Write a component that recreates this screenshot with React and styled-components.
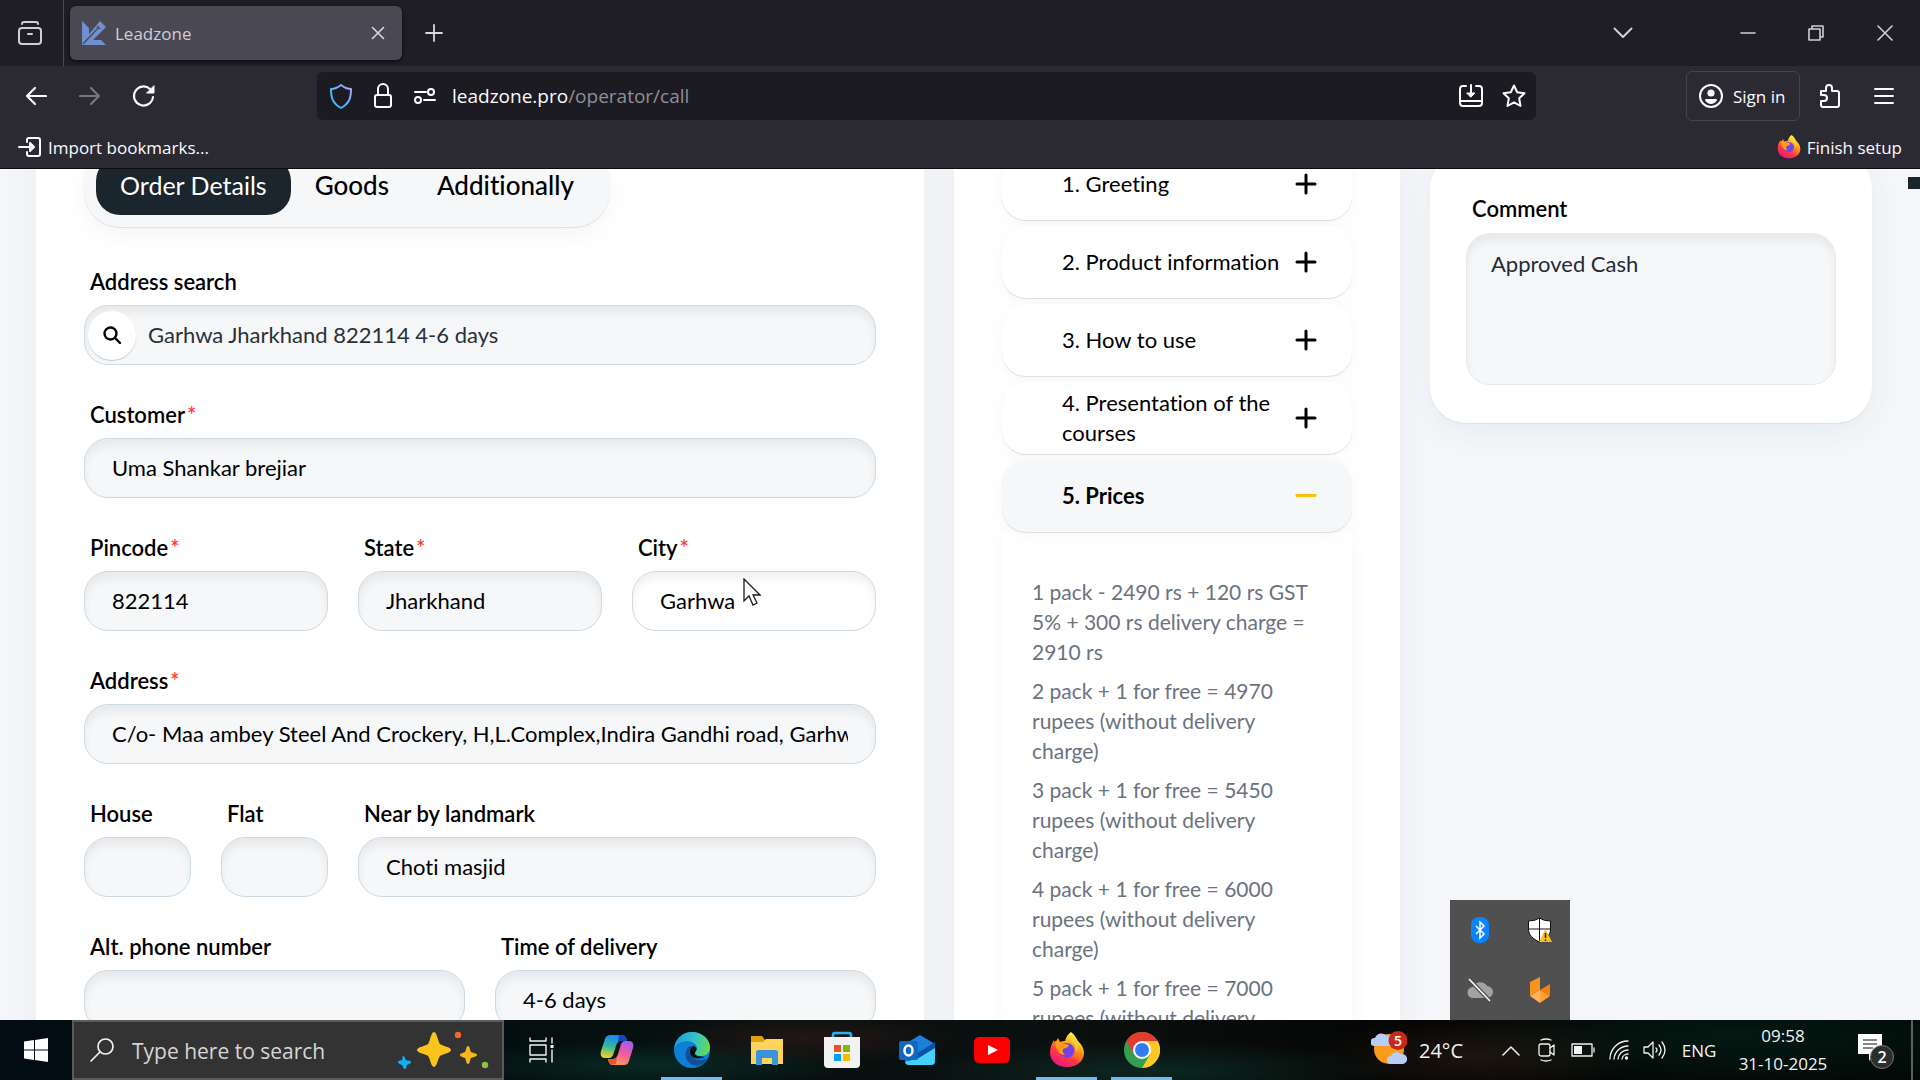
import React from "react";
import styled, { createGlobalStyle, css } from "styled-components";

const UI_FONT = '"Open Sans", "Noto Sans", sans-serif';
const PAGE_FONT = 'Lato, "Open Sans", sans-serif';

const GlobalStyle = createGlobalStyle`
  *, *::before, *::after { box-sizing: border-box; }
  html, body { margin: 0; height: 100%; overflow: hidden; background: #000; }
  button, input, textarea { font: inherit; color: inherit; margin: 0; }
  button { background: none; border: 0; padding: 0; cursor: default; }
  p { margin: 0; }
`;

const Desktop = styled.div`
  display: flex;
  flex-direction: column;
  height: 100vh;
  position: relative;
  overflow: hidden;
  font-family: ${UI_FONT};
`;

/* ---------- browser chrome ---------- */

const TabBar = styled.header`
  display: flex;
  align-items: center;
  flex: none;
  height: 66px;
  background: #1f1e25;
  color: #cfcfd8;
`;

const ViewButton = styled.button`
  width: 64px;
  height: 66px;
  padding-right: 4px;
  display: grid;
  place-items: center;
  border-right: 1px solid #4a4950;
`;

const BrowserTab = styled.div`
  display: flex;
  align-items: center;
  gap: 9px;
  width: 332px;
  height: 54px;
  margin-left: 6px;
  padding: 0 12px;
  border-radius: 6px;
  background: #4a4852;
  box-shadow: 0 1px 4px rgba(0, 0, 0, 0.7);
  font-size: 17px;
`;

const TabTitle = styled.span`
  flex: 1;
`;

const IconButton = styled.button`
  display: grid;
  place-items: center;
  flex: none;
  width: ${(p) => p.$w || 54}px;
  height: 48px;
  color: ${(p) => p.$color || "#fbfbfe"};
`;

const TabClose = styled(IconButton)`
  width: 24px;
  height: 24px;
`;

const WindowControls = styled.div`
  display: flex;
  margin-left: auto;
`;

const NavBar = styled.nav`
  display: flex;
  align-items: center;
  flex: none;
  height: 60px;
  padding: 0 9px;
  background: #2b2a33;
  color: #fbfbfe;
`;

const UrlBar = styled.div`
  display: flex;
  align-items: center;
  flex: 1;
  height: 48px;
  margin: 0 150px 0 146px;
  padding: 0 0 0 3px;
  border-radius: 6px;
  background: #1c1b22;
`;

const UrlText = styled.div`
  flex: 1;
  padding-left: 6px;
  font-size: 19px;
  line-height: 30px;
  color: #8f8f98;
`;

const UrlHost = styled.span`
  color: #fbfbfe;
`;

const SignIn = styled.button`
  display: flex;
  align-items: center;
  gap: 10px;
  height: 50px;
  width: 114px;
  margin-right: 3px;
  padding: 0 11px 0 12px;
  border: 1px solid #45444d;
  border-radius: 6px;
  font-size: 17px;
  white-space: nowrap;
`;

const BookmarkBar = styled.div`
  display: flex;
  justify-content: space-between;
  align-items: center;
  flex: none;
  height: 43px;
  padding: 0 18px 0 18px;
  background: #2b2a33;
  border-bottom: 1px solid #0c0c0d;
  color: #fbfbfe;
`;

const Bookmark = styled.button`
  display: flex;
  align-items: center;
  gap: 6px;
  font-size: 17px;
`;

/* ---------- page ---------- */

const Viewport = styled.main`
  flex: 1;
  min-height: 0;
  overflow: hidden;
  background: #f5f6f9;
  color: #000;
  font-family: ${PAGE_FONT};
  font-size: 22px;
  font-variant-ligatures: none;
  line-height: 30px;
`;

const Page = styled.div`
  display: grid;
  grid-template-columns: 888fr 446fr 442fr;
  gap: 30px;
  min-height: 100%;
  margin-top: -24px;
  padding: 0 48px 0 36px;
`;

const Panel = styled.section`
  background: #fff;
  padding: ${(p) => p.$pad || "0 48px"};
  box-shadow: 0 0 30px rgba(30, 60, 90, 0.05);
  min-width: 0;
`;

const Tabs = styled.div`
  display: inline-flex;
  padding: 12px;
  border-radius: 36px;
  background: #f5f7f9;
  box-shadow: 0 1px 1px rgba(0, 0, 0, 0.1), 0 10px 24px rgba(0, 30, 20, 0.04);
`;

const Tab = styled.button`
  height: 58px;
  padding: 0 24px 2px;
  border-radius: 24px;
  font-size: ${(p) => (p.$active ? 25 : 26)}px;
  font-weight: ${(p) => (p.$active ? 400 : 500)};
  color: ${(p) => (p.$active ? "#fff" : "#000")};
  background: ${(p) => (p.$active ? "#1b252d" : "transparent")};
`;

const Form = styled.form`
  display: grid;
  grid-template-columns: repeat(6, minmax(0, 1fr));
  gap: 35px 30px;
  margin-top: 40px;
`;

const Field = styled.div`
  grid-column: span ${(p) => p.$span};
  display: flex;
  flex-direction: column;
  gap: 8px;
`;

const Label = styled.label`
  padding-left: 6px;
  font-size: 22px;
  font-weight: 600;
  white-space: nowrap;
`;

const Required = styled.span`
  margin-left: 2px;
  color: #ff3b30;
`;

const inset = css`
  border: 1px solid #cddae4;
  border-radius: 24px;
  background: ${(p) => (p.$white ? "#fff" : "#f5f7f9")};
  box-shadow: inset 0 7px 8px rgba(0, 0, 0, 0.06);
  outline: 0;
`;

const TextInput = styled.input`
  ${inset}
  width: 100%;
  height: 60px;
  padding: 0 27px 2px;
`;

const SearchBox = styled.div`
  ${inset}
  display: flex;
  align-items: center;
  height: 60px;
  padding: 0 3px;
  color: #2a3138;
`;

const SearchButton = styled.button`
  display: grid;
  place-items: center;
  flex: none;
  width: 48px;
  height: 49px;
  border-radius: 24px;
  background: #fff;
  color: #000;
  box-shadow: 0 1px 1px #bccddb;
`;

const SearchInput = styled.input`
  flex: 1;
  min-width: 0;
  padding: 0 12px;
  border: 0;
  outline: 0;
  background: transparent;
`;

const Steps = styled.div`
  display: flex;
  flex-direction: column;
  gap: 6px;
`;

const Step = styled.button`
  display: flex;
  align-items: center;
  justify-content: space-between;
  height: 72px;
  padding: 0 35px 0 60px;
  border-radius: 24px;
  background: ${(p) => (p.$open ? "#f5f7f9" : "#fff")};
  box-shadow: 0 1px 1px rgba(40, 70, 110, 0.15), 0 4px 20px rgba(0, 30, 20, 0.03);
  font-weight: ${(p) => (p.$open ? 700 : 400)};
  text-align: left;
`;

const StepTitle = styled.span`
  max-width: 224px;
`;

const StepBody = styled.div`
  display: flex;
  flex-direction: column;
  gap: 9px;
  padding: 45px 30px;
  color: #6b7280;
  font-size: 21px;
  box-shadow: 0 4px 20px rgba(0, 30, 20, 0.04);
`;

const CommentCard = styled.section`
  align-self: start;
  display: flex;
  flex-direction: column;
  gap: 9px;
  margin-top: 8px;
  padding: 41px 36px 38px;
  border-radius: 36px;
  background: #fff;
  box-shadow: 0 1px 1px rgba(0, 0, 0, 0.06), 0 8px 30px rgba(20, 60, 90, 0.06);
`;

const Comment = styled.textarea`
  ${inset}
  display: block;
  width: 100%;
  height: 152px;
  padding: 15px 24px;
  border-color: #e3eaf0;
  color: #252b32;
  resize: none;
`;

const ScrollMark = styled.div`
  position: absolute;
  right: 0;
  top: 177px;
  width: 12px;
  height: 12px;
  background: #1b252d;
`;

const Pointer = styled.svg`
  position: absolute;
  left: 743px;
  top: 578px;
`;

/* ---------- taskbar ---------- */

const Tray = styled.div`
  position: absolute;
  right: 350px;
  bottom: 60px;
  display: grid;
  grid-template-columns: 60px 60px;
  grid-auto-rows: 60px;
  background: #505050;
`;

const TrayItem = styled.button`
  display: grid;
  place-items: center;
`;

const Taskbar = styled.footer`
  display: flex;
  flex: none;
  height: 60px;
  color: #f2f2f2;
  background:
    radial-gradient(ellipse 160px 26px at 42% 30%, rgba(70, 30, 28, 0.45), transparent),
    radial-gradient(ellipse 240px 30px at 60% 85%, rgba(14, 60, 50, 0.55), transparent),
    radial-gradient(ellipse 200px 24px at 34% 75%, rgba(14, 66, 56, 0.5), transparent),
    radial-gradient(ellipse 160px 40px at 77% 60%, rgba(54, 34, 24, 0.5), transparent),
    radial-gradient(ellipse 300px 50px at 90% 30%, rgba(4, 32, 24, 0.7), transparent),
    linear-gradient(90deg, #020d14 0%, #04100f 30%, #0b100f 55%, #040504 75%, #020a08 100%);
`;

const StartButton = styled.button`
  width: 72px;
  display: grid;
  place-items: center;
`;

const TaskSearch = styled.label`
  display: flex;
  align-items: center;
  width: 432px;
  padding: 0 12px 0 16px;
  border: 2px solid #5b5b5b;
  background: #333;
`;

const TaskSearchInput = styled.input`
  flex: 1;
  min-width: 0;
  padding: 2px 0 0 18px;
  border: 0;
  outline: 0;
  background: transparent;
  font-size: 21px;
  &::placeholder { color: #d6d6d6; opacity: 1; }
`;

const TaskApp = styled.button`
  display: grid;
  place-items: center;
  width: 75px;
  height: 60px;
  background: ${(p) =>
    p.$running ? "linear-gradient(#76b9ed, #76b9ed) center bottom / 61px 3px no-repeat" : "none"};
`;

const Status = styled.div`
  display: flex;
  margin-left: auto;
`;

const StatusItem = styled.button`
  display: grid;
  place-items: center;
  width: ${(p) => p.$w || 36}px;
  font-size: 17px;
`;

const Weather = styled.button`
  display: flex;
  align-items: center;
  gap: 12px;
  width: 122px;
  font-size: 20px;
`;

const Clock = styled.button`
  width: 116px;
  font-size: 17px;
  line-height: 28px;
  white-space: nowrap;
`;

const ShowDesktop = styled.button`
  width: 9px;
  border-left: 2px solid #5c5f5f;
`;

/* ---------- drawings ---------- */

const Line = ({ w = 24, h = w, box = `0 0 ${w} ${h}`, sw = 2, children }) => (
  <svg width={w} height={h} viewBox={box} fill="none" stroke="currentColor" strokeWidth={sw} strokeLinecap="round" strokeLinejoin="round" aria-hidden="true">
    {children}
  </svg>
);

const Firefox = ({ size, id }) => (
  <svg width={size} height={size} viewBox="0 0 36 36" aria-hidden="true">
    <defs>
      <linearGradient id={id} x1="0.8" y1="0" x2="0.25" y2="1">
        <stop offset="0.1" stopColor="#fff44f" />
        <stop offset="0.4" stopColor="#ff980e" />
        <stop offset="0.7" stopColor="#ff3647" />
        <stop offset="1" stopColor="#e31587" />
      </linearGradient>
    </defs>
    <path fill={`url(#${id})`} d="M22 0c4 3 5 6 7 9 3 3 6 7 6 12 0 8-7 14-17 14S1 29 1 20c0-5 2-9 4-12l1 3 3-5 2 4c2-1 4-1 5-1 1-4 3-7 6-9z" />
    <circle cx="18" cy="18.500" r="7.500" fill="#7542e5" />
    <path fill="#ff9a1f" d="M6 9c4 0 6 1 8 3 3 0 5 0 6 1-1 3-4 3-6 4-1 2 0 4 2 6-5 0-9-4-10-14z" />
    <path fill="#ffd43a" d="M20 8c5 2 8 6 7 12 3-4 2-9-2-13l-3-5c-2 1-3 4-2 6z" opacity=".8" />
  </svg>
);

const Favicon = () => (
  <svg width="24" height="24" viewBox="0 0 24 24" aria-hidden="true">
    <path fill="#6e90cf" d="M0 0l7 7v6L18 0l6 6-13 13h8l5 5H0z" />
    <path d="M1 23L17 6M15 5l3 3" stroke="#4a4852" strokeWidth="1.200" fill="none" />
  </svg>
);

const SearchGlass = () => (
  <Line w={20} sw={2.4}>
    <circle cx="8.500" cy="8.500" r="6" />
    <path d="M13 13l5 5" />
  </Line>
);

const Plus = () => (
  <Line w={22} sw={3}>
    <path d="M11 2v18M2 11h18" />
  </Line>
);

const Minus = () => (
  <svg width="22" height="22" viewBox="0 0 22 22" aria-hidden="true">
    <rect x="0.500" y="9" width="21" height="3" rx="1" fill="#ffc107" />
  </svg>
);

const Sparkles = () => (
  <svg width="92" height="44" viewBox="0 0 92 44" aria-hidden="true">
    <path fill="#fbc41c" d="M36 4c3 0 4 10 6 12s11 3 11 6-9 4-11 6-3 11-6 11-4-9-6-11-11-3-11-6 9-4 11-6 3-12 6-12z" />
    <path fill="#f8b71c" d="M70 18c2 0 2 5 3 6s6 1 6 3-5 2-6 3-1 6-3 6-2-5-3-6-5-1-5-3 4-2 5-3 1-6 3-6z" />
    <path fill="#0bb1f4" d="M5 28c2 0 2 3 3 4s5 0 5 2-3 2-4 3 0 4-2 4-2-3-3-4-4-1-4-3 3-1 4-2 0-4 1-4z" />
    <circle cx="60" cy="7" r="3.200" fill="#f2672a" />
    <circle cx="87" cy="37" r="3.200" fill="#8bc43f" />
  </svg>
);

const Copilot = () => (
  <svg width="36" height="36" viewBox="0 0 36 36" aria-hidden="true">
    <defs>
      <linearGradient id="cpl" x1="0.500" y1="0" x2="0.300" y2="1">
        <stop offset="0" stopColor="#1b86f2" /><stop offset="0.500" stopColor="#2fb7a0" /><stop offset="1" stopColor="#f4d51c" />
      </linearGradient>
      <linearGradient id="cpr" x1="0.700" y1="0" x2="0.300" y2="1">
        <stop offset="0" stopColor="#a35bf0" /><stop offset="0.500" stopColor="#f25c9a" /><stop offset="1" stopColor="#ffa04c" />
      </linearGradient>
    </defs>
    <path fill="url(#cpl)" d="M11 3h12c3 0 4 2 5 6h-6c-3 0-4 2-5 5l-3 9c-1 2-2 3-4 3H6c-4 0-5-3-4-7L6 7c1-3 3-4 5-4z" />
    <path fill="#1547c0" d="M20 3h3c3 0 4 2 5 6h-6c-1 0-2 0-3 1z" />
    <path fill="url(#cpr)" d="M25 33H14c-3 0-4-2-5-6h5c3 0 4-2 5-5l3-10c1-2 2-3 4-3h4c4 0 5 3 4 7l-4 13c-1 3-3 4-5 4z" />
    <path fill="#f2502f" d="M9 27h5c2 0 3-1 4-3l-1 8c-5 2-7 0-8-5z" />
  </svg>
);

const Edge = () => (
  <svg width="36" height="36" viewBox="0 0 36 36" aria-hidden="true">
    <defs>
      <linearGradient id="edg" x1="0" y1="0.300" x2="1" y2="0.500">
        <stop offset="0" stopColor="#1a9be0" /><stop offset="0.550" stopColor="#35c1c9" /><stop offset="1" stopColor="#63dc52" />
      </linearGradient>
    </defs>
    <circle cx="18" cy="18" r="18" fill="#0f7fd6" />
    <path fill="url(#edg)" d="M0 18C1 7 8 0 18 0c10 0 18 7 18 15 0 6-4 9-9 9-4 0-6-2-6-3 0-2 2-2 2-5 0-4-5-7-10-7C7 9 2 12 0 18z" />
    <path fill="#134f97" d="M13 17c-4 7 0 16 10 17 4 0 8-3 11-8-7 4-16 2-18-4-1-3 0-6 2-8-2 0-4 1-5 3z" />
    <path fill="#0a1210" d="M16 20c0-4 2-6 4-6 3 1 3 3 2 5-2 2-1 4 1 5l8 1c-8 3-15 1-15-5z" />
  </svg>
);

const Explorer = () => (
  <svg width="34" height="34" viewBox="0 0 34 34" aria-hidden="true">
    <path fill="#e0a10c" d="M1 3h11l3 4v4H1z" />
    <path fill="#ffd35c" d="M1 9h12l3-3h17v25H1z" />
    <path fill="#3b93dc" d="M6 19c0-1 1-2 2-2h18c1 0 2 1 2 2v13h-6v-7H12v7H6z" />
  </svg>
);

const Store = () => (
  <svg width="36" height="38" viewBox="0 0 36 38" aria-hidden="true">
    <path d="M9 8V4q0-2 2-2h14q2 0 2 2v4" fill="none" stroke="#29b4ee" strokeWidth="2.500" />
    <path fill="#f2f2f2" d="M0 6h36v27q0 4-4 4H4q-4 0-4-4z" />
    <path fill="#e8502a" d="M10 14h7v7h-7z" /><path fill="#7fba00" d="M19 14h7v7h-7z" />
    <path fill="#00a4ef" d="M10 23h7v7h-7z" /><path fill="#ffb900" d="M19 23h7v7h-7z" />
  </svg>
);

const Outlook = () => (
  <svg width="38" height="36" viewBox="0 0 38 36" aria-hidden="true">
    <path fill="#1d7fd8" d="M7 12L22 3l15 9v17q0 4-4 4H11q-4 0-4-4z" />
    <path fill="#0b52a4" d="M18 22L37 10v7L20 29z" />
    <path fill="#43d0fa" d="M37 16v13q0 4-4 4H11q-3 0-4-3l12-3z" />
    <rect x="1" y="9" width="19" height="19" rx="2" fill="#1168c4" />
    <ellipse cx="10.500" cy="18.500" rx="4" ry="5" fill="none" stroke="#fff" strokeWidth="2.500" />
  </svg>
);

const YouTube = () => (
  <svg width="36" height="26" viewBox="0 0 36 26" aria-hidden="true">
    <rect width="36" height="26" rx="5" fill="#f00" />
    <path fill="#fff" d="M14 8l10 5-10 5z" />
  </svg>
);

const Chrome = () => (
  <svg width="36" height="36" viewBox="0 0 36 36" aria-hidden="true">
    <circle cx="18" cy="18" r="18" fill="#34a04f" />
    <path fill="#ffc926" d="M18 9h15.600A18 18 0 0 1 18 36l8-13.500z" />
    <path fill="#e33b2e" d="M2.400 9A18 18 0 0 1 33.600 9H18l-8 13.500z" />
    <circle cx="18" cy="18" r="9" fill="#fff" />
    <circle cx="18" cy="18" r="7" fill="#2f7cf0" />
  </svg>
);

const WeatherIcon = () => (
  <svg width="36" height="38" viewBox="0 0 36 38" aria-hidden="true">
    <circle cx="18" cy="18" r="15" fill="#fb9a1c" />
    <path fill="#b7cdf5" d="M3 15a4 4 0 0 1 1-8 7 7 0 0 1 12-2 5 5 0 0 1 4 10zM20 33a4 4 0 0 1 0-8 6 6 0 0 1 10-2 5 5 0 0 1 2 10z" />
    <circle cx="27" cy="9.500" r="9.500" fill="#c8281c" />
    <text x="27" y="14.500" fill="#fff" fontSize="14" fontWeight="600" textAnchor="middle" fontFamily="Open Sans">5</text>
  </svg>
);

const Notification = () => (
  <svg width="38" height="38" viewBox="0 0 38 38" aria-hidden="true">
    <path fill="#fff" d="M1 3h24v20H17l-5 7v-7H1z" />
    <path stroke="#111" strokeWidth="1.200" d="M6 9h14M6 13h14M6 17h10" />
    <circle cx="25" cy="26" r="11.500" fill="#2c2e2e" stroke="#777" />
    <text x="25" y="32" fill="#fff" fontSize="16" fontWeight="600" textAnchor="middle" fontFamily="Open Sans">2</text>
  </svg>
);

/* ---------- composition ---------- */

const FIELDS = [
  { id: "customer", label: "Customer", required: true, span: 6, value: "Uma Shankar brejiar" },
  { id: "pincode", label: "Pincode", required: true, span: 2, value: "822114" },
  { id: "state", label: "State", required: true, span: 2, value: "Jharkhand" },
  { id: "city", label: "City", required: true, span: 2, value: "Garhwa", white: true },
  {
    id: "address", label: "Address", required: true, span: 6,
    value: "C/o- Maa ambey Steel And Crockery, H,L.Complex,Indira Gandhi road, Garhwa",
  },
  { id: "house", label: "House", span: 1, value: "" },
  { id: "flat", label: "Flat", span: 1, value: "" },
  { id: "landmark", label: "Near by landmark", span: 4, value: "Choti masjid" },
  { id: "phone", label: "Alt. phone number", span: 3, value: "" },
  { id: "delivery", label: "Time of delivery", span: 3, value: "4-6 days" },
];

const STEPS = ["1. Greeting", "2. Product information", "3. How to use", "4. Presentation of the courses"];

const PRICES = [
  "1 pack - 2490 rs + 120 rs GST 5% + 300 rs delivery charge = 2910 rs",
  "2 pack + 1 for free = 4970 rupees (without delivery charge)",
  "3 pack + 1 for free = 5450 rupees (without delivery charge)",
  "4 pack + 1 for free = 6000 rupees (without delivery charge)",
  "5 pack + 1 for free = 7000 rupees (without delivery charge)",
];

const APPS = [
  { name: "Copilot", icon: <Copilot /> },
  { name: "Edge", icon: <Edge />, running: true },
  { name: "File Explorer", icon: <Explorer /> },
  { name: "Microsoft Store", icon: <Store /> },
  { name: "Outlook", icon: <Outlook /> },
  { name: "YouTube", icon: <YouTube /> },
  { name: "Firefox", icon: <Firefox size={36} id="ffb" />, running: true },
  { name: "Chrome", icon: <Chrome />, running: true },
];

function BrowserChrome() {
  return (
    <>
      <TabBar>
        <ViewButton aria-label="Firefox View">
          <Line>
            <rect x="1" y="7" width="22" height="16" rx="3" />
            <path d="M4 3q0-2 2-2h12q2 0 2 2M10 13h4" />
          </Line>
        </ViewButton>
        <BrowserTab>
          <Favicon />
          <TabTitle>Leadzone</TabTitle>
          <TabClose aria-label="Close tab" $color="#d8d8de">
            <Line w={14} sw={1.6}><path d="M1.500 1.500l11 11M12.500 1.500l-11 11" /></Line>
          </TabClose>
        </BrowserTab>
        <IconButton aria-label="New tab" $w={64} $color="#d8d8de">
          <Line w={18} sw={1.8}><path d="M9 1v16M1 9h16" /></Line>
        </IconButton>
        <WindowControls>
          <IconButton aria-label="List all tabs" $w={182} $color="#cfcfd4">
            <Line w={20} h={12}><path d="M1.500 1.500L10 10l8.500-8.500" /></Line>
          </IconButton>
          <IconButton aria-label="Minimize" $w={68} $color="#cfcfd4">
            <Line w={16} sw={1.6}><path d="M1 8h14" /></Line>
          </IconButton>
          <IconButton aria-label="Restore" $w={68} $color="#cfcfd4">
            <Line w={16} sw={1.6}><path d="M1 4h11v11H1zM4 4V1h11v11h-3" /></Line>
          </IconButton>
          <IconButton aria-label="Close" $w={70} $color="#cfcfd4">
            <Line w={16} sw={1.6}><path d="M1 1l14 14M15 1L1 15" /></Line>
          </IconButton>
        </WindowControls>
      </TabBar>
      <NavBar>
        <IconButton aria-label="Back">
          <Line w={22} h={20} sw={2.2}><path d="M21 10H2M10 2l-8 8 8 8" /></Line>
        </IconButton>
        <IconButton aria-label="Forward" $color="#77767e">
          <Line w={22} h={20} sw={2.2}><path d="M1 10h19M12 2l8 8-8 8" /></Line>
        </IconButton>
        <IconButton aria-label="Reload">
          <Line w={24} h={24} sw={2.2}><path d="M21 13a9.500 9.500 0 1 1-3-8" /><path fill="currentColor" strokeWidth="1" d="M22 2v7h-7z" /></Line>
        </IconButton>
        <UrlBar>
          <IconButton aria-label="Tracking protection" $w={42}>
            <svg width="24" height="26" viewBox="0 0 24 26" fill="none" aria-hidden="true">
              <defs>
                <linearGradient id="shield" x1="1" y1="0" x2="0" y2="1">
                  <stop offset="0" stopColor="#b5a0ff" /><stop offset="1" stopColor="#16c5f8" />
                </linearGradient>
              </defs>
              <path stroke="url(#shield)" strokeWidth="2" strokeLinejoin="round" d="M12 2q5 4 10 4c0 8-1 14-10 19C3 20 2 14 2 6q5 0 10-4z" />
            </svg>
          </IconButton>
          <IconButton aria-label="Connection secure" $w={42}>
            <Line w={20} h={26}><rect x="2" y="12" width="16" height="12" rx="2" /><path d="M5 12V6a5 5 0 0 1 10 0v6" /></Line>
          </IconButton>
          <IconButton aria-label="Permissions" $w={42}>
            <Line w={22} h={18}><path d="M1 5h11M10 13h11" /><circle cx="17" cy="5" r="3" /><circle cx="4" cy="13" r="3" /></Line>
          </IconButton>
          <UrlText role="textbox" aria-label="Address"><UrlHost>leadzone.pro</UrlHost>/operator/call</UrlText>
          <IconButton aria-label="Install page" $w={42}>
            <Line w={24}>
              <path d="M7 2H4Q1 2 1 5v14q0 3 3 3h16q3 0 3-3V5q0-3-3-3h-3M1 17h22M12 1v11" />
              <path fill="currentColor" d="M8 9h8l-4 4z" strokeWidth="1" />
            </Line>
          </IconButton>
          <IconButton aria-label="Bookmark this page" $w={44}>
            <Line w={24}><path d="M12 1.500l3.200 6.700 7.300 1-5.300 5.100 1.300 7.700-6.500-3.600L5.500 22l1.300-7.700L1.500 9.200l7.300-1z" /></Line>
          </IconButton>
        </UrlBar>
        <SignIn>
          <Line w={24}>
            <circle cx="12" cy="12" r="11" />
            <circle cx="12" cy="9" r="2.600" fill="currentColor" />
            <path fill="currentColor" d="M7 16h10q-2 3-5 3t-5-3z" />
          </Line>
          Sign in
        </SignIn>
        <IconButton aria-label="Extensions">
          <Line w={22} h={26}>
            <path d="M2 8h5V5a3 3 0 0 1 6 0v3h5q2 0 2 2v12q0 2-2 2H4q-2 0-2-2v-4h3a3 3 0 0 0 0-6H2z" />
          </Line>
        </IconButton>
        <IconButton aria-label="Menu">
          <Line w={20} h={16}><path d="M1 1h18M1 8h18M1 15h18" /></Line>
        </IconButton>
      </NavBar>
      <BookmarkBar>
        <Bookmark>
          <Line w={24} h={20}>
            <path d="M9 5V3q0-2 2-2h9q2 0 2 2v14q0 2-2 2h-9q-2 0-2-2v-2M1 10h14" />
            <path fill="currentColor" d="M12 6l4 4-4 4z" />
          </Line>
          Import bookmarks...
        </Bookmark>
        <Bookmark>
          <Firefox size={24} id="ffa" />
          Finish setup
        </Bookmark>
      </BookmarkBar>
    </>
  );
}

function OrderPanel() {
  return (
    <Panel>
      <Tabs>
        <Tab $active>Order Details</Tab>
        <Tab>Goods</Tab>
        <Tab>Additionally</Tab>
      </Tabs>
      <Form onSubmit={(e) => e.preventDefault()}>
        <Field $span={6}>
          <Label htmlFor="search">Address search</Label>
          <SearchBox>
            <SearchButton type="button" aria-label="Search"><SearchGlass /></SearchButton>
            <SearchInput id="search" defaultValue="Garhwa Jharkhand 822114 4-6 days" />
          </SearchBox>
        </Field>
        {FIELDS.map((f) => (
          <Field key={f.id} $span={f.span}>
            <Label htmlFor={f.id}>
              {f.label}
              {f.required && <Required>*</Required>}
            </Label>
            <TextInput id={f.id} defaultValue={f.value} $white={f.white} />
          </Field>
        ))}
      </Form>
    </Panel>
  );
}

function ScriptPanel() {
  return (
    <Panel $pad="3px 48px 0">
      <Steps>
        {STEPS.map((s) => (
          <Step key={s}><StepTitle>{s}</StepTitle><Plus /></Step>
        ))}
        <Step $open><StepTitle>5. Prices</StepTitle><Minus /></Step>
      </Steps>
      <StepBody>
        {PRICES.map((p) => <p key={p}>{p}</p>)}
      </StepBody>
    </Panel>
  );
}

function SystemTray() {
  return (
    <Tray>
      <TrayItem aria-label="Bluetooth">
        <svg width="18" height="26" viewBox="0 0 18 26" aria-hidden="true">
          <rect width="18" height="26" rx="8" fill="#0a84ff" />
          <path d="M5 9l8 8-4 4V5l4 4-8 8" fill="none" stroke="#fff" strokeWidth="1.500" />
        </svg>
      </TrayItem>
      <TrayItem aria-label="Security">
        <svg width="26" height="26" viewBox="0 0 26 26" aria-hidden="true">
          <path d="M12.500 1q4 3 11 3v8c0 6-4 10-11 13C6 22 1.500 18 1.500 12V4q7 0 11-3z" fill="#fff" stroke="#111" />
          <path d="M12.500 1v24M1.500 12h22" stroke="#111" />
          <path fill="#fdc11a" d="M18.500 12L25 25H12z" />
          <path d="M18.500 16v5M18.500 22.500v1.500" stroke="#222" strokeWidth="1.500" />
        </svg>
      </TrayItem>
      <TrayItem aria-label="OneDrive">
        <svg width="26" height="24" viewBox="0 0 26 24" aria-hidden="true">
          <path fill="#a2a2a2" d="M6 20a5 5 0 0 1 0-11 8 8 0 0 1 14-1 6 6 0 0 1 0 12z" />
          <path d="M2 1l21 22" stroke="#505050" strokeWidth="4" /><path d="M2 1l21 22" stroke="#fff" strokeWidth="1.600" />
        </svg>
      </TrayItem>
      <TrayItem aria-label="Updater">
        <svg width="22" height="26" viewBox="0 0 22 26" aria-hidden="true">
          <path fill="#f8931d" d="M11 0v13L1 19V5z" /><path fill="#fdb45c" d="M1 19l10-6v13z" />
          <path fill="#ffa338" d="M11 13l10 6-10 7z" /><path fill="#f97f0a" d="M11 13l10-6v12z" />
        </svg>
      </TrayItem>
    </Tray>
  );
}

function WindowsTaskbar() {
  return (
    <Taskbar>
      <StartButton aria-label="Start">
        <svg width="24" height="24" viewBox="0 0 24 24" fill="#fff" aria-hidden="true">
          <path d="M0 3.500l10-1.400v9.400H0zM11 2l13-2v11.500H11zM0 12.500h10v9.400L0 20.500zM11 12.500h13V24l-13-2z" />
        </svg>
      </StartButton>
      <TaskSearch>
        <Line w={24} sw={1.7}><circle cx="15.500" cy="8.500" r="7.500" /><path d="M10 14l-9 9" /></Line>
        <TaskSearchInput placeholder="Type here to search" aria-label="Type here to search" />
        <Sparkles />
      </TaskSearch>
      <TaskApp aria-label="Task view">
        <Line w={26} sw={1.4}>
          <path d="M1 1v3h16V1M1 8h16v10H1zM1 25v-3h16v3M23 1v5M23 13v12" />
          <path d="M21.500 8h3v3h-3z" fill="currentColor" stroke="none" />
        </Line>
      </TaskApp>
      {APPS.map((a) => (
        <TaskApp key={a.name} aria-label={a.name} $running={a.running}>{a.icon}</TaskApp>
      ))}
      <Status>
        <Weather><WeatherIcon />24°C</Weather>
        <StatusItem aria-label="Show hidden icons">
          <Line w={18} h={11} sw={1.5}><path d="M1 10l8-8 8 8" /></Line>
        </StatusItem>
        <StatusItem aria-label="Meet now">
          <Line w={18} h={24} sw={1.3}>
            <rect x="1" y="6" width="11" height="12" rx="2" /><path d="M12 10l4-3v10l-4-3M3 2q5-2 10 0M3 22q5 2 10 0" />
          </Line>
        </StatusItem>
        <StatusItem aria-label="Battery">
          <Line w={24} h={14} sw={1.3}>
            <rect x="1" y="1" width="20" height="12" /><path d="M23 5v4" /><path d="M3 3h8v8H3z" fill="currentColor" stroke="none" />
          </Line>
        </StatusItem>
        <StatusItem aria-label="Network">
          <Line w={20} sw={1.3}>
            <path d="M1 19A18 18 0 0 1 19 1M5 19A14 14 0 0 1 19 6M9 19a10 10 0 0 1 10-9M13 19a6 6 0 0 1 6-5" />
            <circle cx="17.500" cy="18" r="1" fill="currentColor" />
          </Line>
        </StatusItem>
        <StatusItem aria-label="Volume">
          <Line w={24} h={20} sw={1.3}>
            <path d="M1 7h4l5-5v16l-5-5H1zM13 8q2 2 0 4M16 5q4 5 0 10M19 2q6 8 0 16" />
          </Line>
        </StatusItem>
        <StatusItem $w={52}>ENG</StatusItem>
        <Clock>09:58<br />31-10-2025</Clock>
        <StatusItem $w={70} aria-label="Notifications"><Notification /></StatusItem>
        <ShowDesktop aria-label="Show desktop" />
      </Status>
    </Taskbar>
  );
}

export default function App() {
  return (
    <Desktop>
      <GlobalStyle />
      <BrowserChrome />
      <Viewport>
        <Page>
          <OrderPanel />
          <ScriptPanel />
          <CommentCard>
            <Label htmlFor="comment">Comment</Label>
            <Comment id="comment" defaultValue="Approved Cash" />
          </CommentCard>
        </Page>
      </Viewport>
      <WindowsTaskbar />
      <SystemTray />
      <ScrollMark />
      <Pointer width="18" height="29" viewBox="0 0 18 29" aria-hidden="true">
        <path d="M1 1v22l5-5 4 9 4-2-4-8h7z" fill="#fff" stroke="#1a1a22" strokeWidth="1.300" />
      </Pointer>
    </Desktop>
  );
}
